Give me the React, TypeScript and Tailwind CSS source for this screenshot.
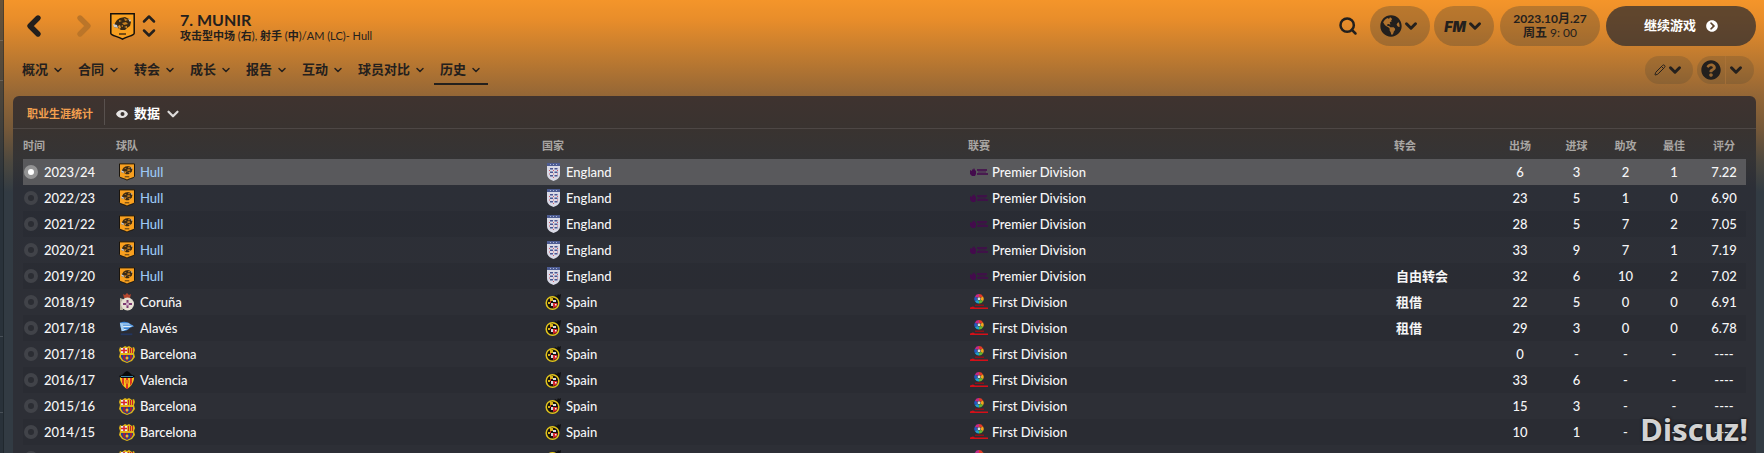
import { useState } from "react";
import { ChevronDown, ChevronLeft, ChevronRight, ChevronUp, Pencil, Search } from "lucide-react";
import { FaChevronCircleRight, FaGlobeAmericas, FaQuestionCircle } from "react-icons/fa";

type Club = "Hull" | "Coruña" | "Alavés" | "Barcelona" | "Valencia";

interface Season {
    year: string;
    club: Club;
    english: boolean;
    transfer?: string;
    stats: string[];
}

const tabs = ["概况", "合同", "转会", "成长", "报告", "互动", "球员对比", "历史"];

const statHeads = ["出场", "进球", "助攻", "最佳", "评分"];

const seasons: Season[] = [
    { year: "2023/24", club: "Hull", english: true, stats: ["6", "3", "2", "1", "7.22"] },
    { year: "2022/23", club: "Hull", english: true, stats: ["23", "5", "1", "0", "6.90"] },
    { year: "2021/22", club: "Hull", english: true, stats: ["28", "5", "7", "2", "7.05"] },
    { year: "2020/21", club: "Hull", english: true, stats: ["33", "9", "7", "1", "7.19"] },
    { year: "2019/20", club: "Hull", english: true, transfer: "自由转会", stats: ["32", "6", "10", "2", "7.02"] },
    { year: "2018/19", club: "Coruña", english: false, transfer: "租借", stats: ["22", "5", "0", "0", "6.91"] },
    { year: "2017/18", club: "Alavés", english: false, transfer: "租借", stats: ["29", "3", "0", "0", "6.78"] },
    { year: "2017/18", club: "Barcelona", english: false, stats: ["0", "-", "-", "-", "----"] },
    { year: "2016/17", club: "Valencia", english: false, stats: ["33", "6", "-", "-", "----"] },
    { year: "2015/16", club: "Barcelona", english: false, stats: ["15", "3", "-", "-", "----"] },
    { year: "2014/15", club: "Barcelona", english: false, stats: ["10", "1", "-", "-", "----"] },
    { year: "2013/14", club: "Barcelona", english: false, stats: ["0", "-", "-", "-", "----"] },
];

function HullCrest({ className }: { className: string }) {
    return (
        <svg viewBox="0 0 25 27" className={className} aria-hidden="true">
            <path d="M.8.8h23.4v19.500c0 2.500-7.500 3-11.700 5.900C8.300 23.300.8 22.800.8 20.300z" fill="#f9a01f" stroke="#15110c" strokeWidth="1.500" />
            <path d="M5 10l2-3 3-2 5-1 4 2 2 3-1 4-3 2-2 2h-4l-3-2-4-1z" fill="#3a2a15" />
            <path d="M9 7l3 1-3 1zM14 5l1 3 3-1zM12 10l4-1 2 2-4 1zM11 13l2-1v2z" fill="#c98221" />
            <path d="M3 11l4 1 1 3-4-1zM18 6l3 1-1 2z" fill="#c9ccd2" />
            <path d="M8 13l2-1 1 3-2 1zM14 14l3-1v2z" fill="#e29126" />
            <path d="M9 21h7" stroke="#4b3211" strokeWidth="1.500" />
        </svg>
    );
}

function BarcelonaCrest() {
    return (
        <svg viewBox="0 0 16 17" className="h-[17px] w-4" aria-hidden="true">
            <path d="M1 1l2 1 3-2 2 1 2-1 3 2 2-1 1 3-1 3 1 4-3 4-5 2-5-2-3-4 1-4-1-3z" fill="#e0b416" />
            <path d="M2 2h6v5H2z" fill="#f1e9e6" />
            <path d="M4.200 2h1.600v5H4.200zM2 3.700h6v1.600H2z" fill="#d8242f" />
            <path d="M9 2h1v5H9zM11 2h1v5h-1zM13 2h1v5h-1z" fill="#c8202c" />
            <path d="M2 9h12v2l-2 3-4 2-4-2-2-3z" fill="#21438f" />
            <path d="M4 9h2v5.500L4 13zM7 9h2v6H7zM11 9h2v3l-2 2z" fill="#a01b3c" />
            <circle cx="8" cy="12" r="1.500" fill="#e8b92a" />
        </svg>
    );
}

function ValenciaCrest() {
    return (
        <svg viewBox="0 0 16 18" className="h-[18px] w-4" aria-hidden="true">
            <path d="M1 6h14c.5 4-3 10-7 12C4 16 .5 10 1 6z" fill="#f6c21c" />
            <path d="M3 6h2v9L3 12zM7 6h2v12H7zM11 6h2v6l-2 3z" fill="#dc3320" />
            <path d="M0 5l3-1 3-3 2-1 2 1 3 3 3 1-2 2H2z" fill="#07090b" />
            <path d="M2 5h12v1H2z" fill="#3d86ab" />
            <path d="M6 9h4v3l-2 1-2-1z" fill="#e8871f" />
        </svg>
    );
}

function CorunaCrest() {
    return (
        <svg viewBox="0 0 16 18" className="h-[18px] w-4" aria-hidden="true">
            <path d="M4 1l2 1 2-2 2 2 2-1-1 4H5z" fill="#b5472f" />
            <path d="M1 5l3 1v11H1z" fill="#b8b2a0" />
            <circle cx="8.500" cy="11" r="6.500" fill="#e7e0d3" />
            <path d="M4 10h9v2H4zM7.500 7h2v8h-2z" fill="#7d3b72" />
            <circle cx="8.500" cy="11" r="1.500" fill="#d5b6cb" />
        </svg>
    );
}

function AlavesCrest() {
    return (
        <svg viewBox="0 0 18 17" className="h-[17px] w-[18px]" aria-hidden="true">
            <path d="M1 2c4-2 9-1 11 1l5 3-5 2c-2 3-6 4-9 3-1-3-2-6-2-9z" fill="#3d86d6" />
            <path d="M3 3h8l2 1H3zM4 5.500h12l-4 1.500H4zM5 9h5l-4 1.500z" fill="#dcedfa" />
            <path d="M1 2l3 1 2 8-3 .5z" fill="#a9d1f1" />
            <path d="M2 14h13v2H2z" fill="#23365f" />
        </svg>
    );
}

function ClubCrest({ club }: { club: Club }) {
    if (club === "Barcelona") return <BarcelonaCrest />;
    if (club === "Valencia") return <ValenciaCrest />;
    if (club === "Coruña") return <CorunaCrest />;
    if (club === "Alavés") return <AlavesCrest />;
    return <HullCrest className="h-[18px] w-4" />;
}

function EnglandBadge() {
    return (
        <svg viewBox="0 0 13 18" className="h-[18px] w-[13px]" aria-hidden="true">
            <path d="M0 0h13v11c0 4-3.500 6-6.500 7C3.500 17 0 15 0 11z" fill="#d9dae6" />
            <path d="M0 0h13v3H0z" fill="#4d5c92" />
            <path d="M3 1h1v1H3zM6 1h1v1H6zM9 1h1v1H9z" fill="#a9b4d6" />
            <path d="M3 5h3v1.500H3zM7.500 5h3v1.500h-3zM3 8.500h3V10H3zM7.500 8.500h3V10h-3zM3 12h3v1.500H3zM7.500 12h3v1.500h-3z" fill="#4b5590" />
            <path d="M2 7h1v1H2zM6 7h1v1H6zM10 7h1v1h-1zM2 10.500h1v1H2zM6 10.500h1v1H6zM10 10.500h1v1h-1zM6 14h1v1H6z" fill="#cf5a6b" />
        </svg>
    );
}

function SpainBadge() {
    return (
        <svg viewBox="0 0 16 17" className="h-[17px] w-4" aria-hidden="true">
            <path d="M9 3l1-2 2 1 1-2 1 1 2-1-1 6-3 3z" fill="#101012" />
            <circle cx="7.500" cy="9" r="6.300" fill="#15130f" stroke="#e2c51c" strokeWidth="1.500" />
            <path d="M5 4h3v3H5zM3 8h2v2H3z" fill="#d8b21c" />
            <path d="M8 6h3v2H8zM6 9h2v3H6z" fill="#d9dadd" />
            <path d="M8 9h4.500l-1 4-3.500 1zM5 7h1v2H5z" fill="#d4232b" />
            <path d="M10 10h1.500v1.500H10z" fill="#f0eded" />
        </svg>
    );
}

function PremierBadge() {
    return (
        <svg viewBox="0 0 18 8" className="h-2 w-[18px]" aria-hidden="true">
            <path d="M0 2l2 1V1l1 1 1-2 1 2 1 1v3L5 8H2L0 6z" fill="#430b4c" />
            <path d="M7 1h10v2H7zM7 5h11v2H7z" fill="#430b4c" opacity=".8" />
            <path d="M8 3h8v2H8z" fill="#430b4c" opacity=".4" />
        </svg>
    );
}

function LaLigaBadge() {
    return (
        <svg viewBox="0 0 18 16" className="h-4 w-[18px]" aria-hidden="true">
            <g fill="none" strokeWidth="2.800">
                <path d="M9 1.500a3.300 3.300 0 0 1 2.900 1.600" stroke="#e23a26" />
                <path d="M11.900 3.100a3.300 3.300 0 0 1 0 3.400" stroke="#f2a51d" />
                <path d="M11.900 6.500A3.300 3.300 0 0 1 9 8.100" stroke="#64b22e" />
                <path d="M9 8.100a3.300 3.300 0 0 1-2.900-1.600" stroke="#1fa0c9" />
                <path d="M6.100 6.500a3.300 3.300 0 0 1 0-3.400" stroke="#2458c4" />
                <path d="M6.100 3.100A3.300 3.300 0 0 1 9 1.500" stroke="#c42a86" />
            </g>
            <circle cx="9" cy="4.800" r="1.500" fill="#d9dde2" />
            <path d="M5 10.500h9V12H5z" fill="#8e1018" />
            <path d="M0 13.500l3-1 2 1h13V15H0z" fill="#d50f18" />
        </svg>
    );
}

export default function App() {
    const [activeTab, setActiveTab] = useState("历史");
    const [selected, setSelected] = useState(0);

    return (
        <div className="relative flex h-screen overflow-hidden font-[Lato,'Noto_Sans_CJK_SC',sans-serif] text-[#24201d]">
            <div className="flex w-1 shrink-0 flex-col border-r border-black/20 bg-[linear-gradient(#6b5438_0px,#4a443b_100px,#29323a_190px)]">
                <div className="h-[41px] border-b border-white/15" />
                <div className="h-10 border-b border-white/15" />
                <div className="h-64 border-b border-white/15" />
                <div className="h-[76px] border-b border-white/15" />
            </div>

            <main className="flex min-w-0 grow flex-col bg-[linear-gradient(#f4952a_0px,#e88d2a_20px,#936636_96px,#745839_130px,#4c483f_162px,#323b43_192px)] pr-2 pl-[9px]">
                <header className="flex h-[52px] shrink-0 items-center justify-between">
                    <div className="flex h-full items-center">
                        <button aria-label="后退" className="ml-px flex w-10 justify-center">
                            <ChevronLeft size={32} strokeWidth={4} className="text-[#221f1d]" />
                        </button>
                        <button aria-label="前进" className="ml-2.5 flex w-10 justify-center">
                            <ChevronRight size={32} strokeWidth={4} className="text-[#bb7529]" />
                        </button>
                        <HullCrest className="ml-1.5 h-[27px] w-[25px]" />
                        <div className="ml-1 flex flex-col">
                            <button aria-label="上一名球员">
                                <ChevronUp size={20} strokeWidth={3} className="-mb-1.5" />
                            </button>
                            <button aria-label="下一名球员">
                                <ChevronDown size={20} strokeWidth={3} />
                            </button>
                        </div>
                        <div className="ml-[21px]">
                            <h1 className="text-[16px] leading-[18px] font-bold">7. MUNIR</h1>
                            <p className="text-[11px] leading-[13px]">
                                <b>攻击型中场</b> (<b>右</b>), <b>射手</b> (<b>中</b>)/AM (LC)- Hull
                            </p>
                        </div>
                    </div>

                    <div className="flex items-center">
                        <button aria-label="搜索" className="mr-3">
                            <Search size={20} strokeWidth={3} className="text-[#221f1d]" />
                        </button>
                        <button aria-label="世界" className="flex h-10 w-[60px] items-center justify-center rounded-full bg-[#3a3a34]/30">
                            <FaGlobeAmericas size={22} className="text-[#221f1d]" />
                            <ChevronDown size={18} strokeWidth={4} />
                        </button>
                        <button className="ml-1 flex h-10 w-[60px] items-center justify-center rounded-full bg-[#3a3a34]/30">
                            <span className="font-[Inter,sans-serif] text-[14px] font-black italic">FM</span>
                            <ChevronDown size={18} strokeWidth={4} />
                        </button>
                        <div className="ml-1.5 flex h-10 w-[100px] flex-col items-center justify-center rounded-full bg-[#3a3a34]/30 text-[12px] leading-[14px]">
                            <span className="font-bold">2023.10月.27</span>
                            <span>
                                <b>周五</b> 9: 00
                            </span>
                        </div>
                        <button className="ml-1.5 flex h-10 w-[150px] items-center justify-center gap-2.5 rounded-full bg-[#29292f]/72 text-[13px] font-bold text-white">
                            继续游戏
                            <FaChevronCircleRight size={12} />
                        </button>
                    </div>
                </header>

                <div className="flex h-11 shrink-0 items-start justify-between">
                    <nav className="ml-[3px] flex gap-0.5">
                        {tabs.map((tab) => (
                            <button
                                key={tab}
                                onClick={() => setActiveTab(tab)}
                                className={`flex h-[33px] items-center gap-1 border-b-2 px-1.5 pt-1 text-[13px] font-bold ${
                                    tab === activeTab ? "border-[#24201d]" : "border-transparent"
                                }`}
                            >
                                {tab}
                                <ChevronDown size={12} strokeWidth={3} />
                            </button>
                        ))}
                    </nav>
                    <div className="mt-1 mr-0.5 flex gap-1">
                        <button aria-label="编辑" className="flex h-7 w-12 items-center justify-center rounded-full bg-[#3a3a34]/20">
                            <Pencil size={12} />
                            <ChevronDown size={18} strokeWidth={4} />
                        </button>
                        <div className="flex h-7 w-[57px] overflow-hidden rounded-full bg-[#3a3a34]/20">
                            <button aria-label="帮助" className="flex grow items-center justify-center border-r border-[#b0763a]/60">
                                <FaQuestionCircle size={20} className="text-[#221f1d]" />
                            </button>
                            <button aria-label="帮助菜单" className="flex w-7 items-center pl-px">
                                <ChevronDown size={18} strokeWidth={4} />
                            </button>
                        </div>
                    </div>
                </div>

                <section className="min-h-0 grow overflow-hidden rounded-t-md bg-[linear-gradient(#3f332f_0px,#393330_33px,#353435_62px,#2c2f37_92px,#2d2f36_200px)]">
                    <div className="flex h-[33px] items-center border-b border-white/10">
                        <h2 className="ml-3.5 w-[77px] pt-1 text-[11px] whitespace-nowrap font-bold text-[#f4a04f]">职业生涯统计</h2>
                        <div className="h-[26px] w-px bg-white/15" />
                        <button className="ml-[11px] flex items-center pt-1 text-[13px] font-bold text-white">
                            <svg viewBox="0 0 12 8" className="mr-1.5 h-2 w-3" aria-hidden="true">
                                <path d="M0 4C2-1.300 10-1.300 12 4 10 9.300 2 9.300 0 4z" fill="#e6e4e3" />
                                <circle cx="6.500" cy="4" r="2" fill="#38312e" />
                            </svg>
                            数据
                            <ChevronDown size={18} strokeWidth={3} className="ml-1 text-[#dcdad9]" />
                        </button>
                    </div>

                    <div className="px-2.5">
                        <table className="w-full table-fixed border-collapse text-left text-[13px] leading-5 font-medium text-[#f6f6f7]">
                            <colgroup>
                                <col className="w-[93px]" />
                                <col />
                                <col />
                                <col />
                                <col className="w-[98px]" />
                                <col className="w-14" />
                                <col className="w-[57px]" />
                                <col className="w-[41px]" />
                                <col className="w-14" />
                                <col className="w-11" />
                            </colgroup>
                            <thead>
                                <tr className="h-[30px] text-[11px] text-[#a9a6a3]">
                                    <th className="p-0 pt-1">时间</th>
                                    <th className="p-0 pt-1">球队</th>
                                    <th className="p-0 pt-1">国家</th>
                                    <th className="p-0 pt-1">联赛</th>
                                    <th className="p-0 pt-1">转会</th>
                                    {statHeads.map((head) => (
                                        <th key={head} className="p-0 pt-1 text-center">
                                            {head}
                                        </th>
                                    ))}
                                </tr>
                            </thead>
                            <tbody>
                                {seasons.map((s, i) => (
                                    <tr key={i} className={`h-[26px] ${i === selected ? "bg-[#59595c]" : i % 2 === 0 ? "bg-black/5" : ""}`}>
                                        <td className="p-0">
                                            <label className="flex items-center gap-1.5 pl-px">
                                                <input
                                                    type="radio"
                                                    name="season"
                                                    checked={i === selected}
                                                    onChange={() => setSelected(i)}
                                                    className="size-3.5 appearance-none rounded-full border-4 border-[#414349] bg-[#2b2d33] checked:border-[#939394] checked:bg-white"
                                                />
                                                {s.year}
                                            </label>
                                        </td>
                                        <td className="p-0">
                                            <div className="flex items-center gap-[5px] pl-[3px]">
                                                <span className="flex w-4 justify-center">
                                                    <ClubCrest club={s.club} />
                                                </span>
                                                <a href="#" className={s.club === "Hull" ? "text-[#9cc8f5]" : ""}>
                                                    {s.club}
                                                </a>
                                            </div>
                                        </td>
                                        <td className="p-0">
                                            <div className="flex items-center gap-[5px] pl-[3px]">
                                                <span className="flex w-4 justify-center">{s.english ? <EnglandBadge /> : <SpainBadge />}</span>
                                                {s.english ? "England" : "Spain"}
                                            </div>
                                        </td>
                                        <td className="p-0">
                                            <div className="flex items-center gap-1 pl-0.5">
                                                {s.english ? <PremierBadge /> : <LaLigaBadge />}
                                                {s.english ? "Premier Division" : "First Division"}
                                            </div>
                                        </td>
                                        <td className="p-0 pl-0.5 font-bold">{s.transfer}</td>
                                        {s.stats.map((value, n) => (
                                            <td key={n} className="p-0 text-center">
                                                {value}
                                            </td>
                                        ))}
                                    </tr>
                                ))}
                            </tbody>
                        </table>
                    </div>
                </section>
            </main>

            {/* Forum watermark */}
            <div className="pointer-events-none absolute right-4 bottom-1 font-['Open_Sans',sans-serif] text-[31px] leading-10 font-bold text-[#d2d2d2] [text-shadow:0_0_3px_#000]">
                Discuz!
            </div>
        </div>
    );
}
